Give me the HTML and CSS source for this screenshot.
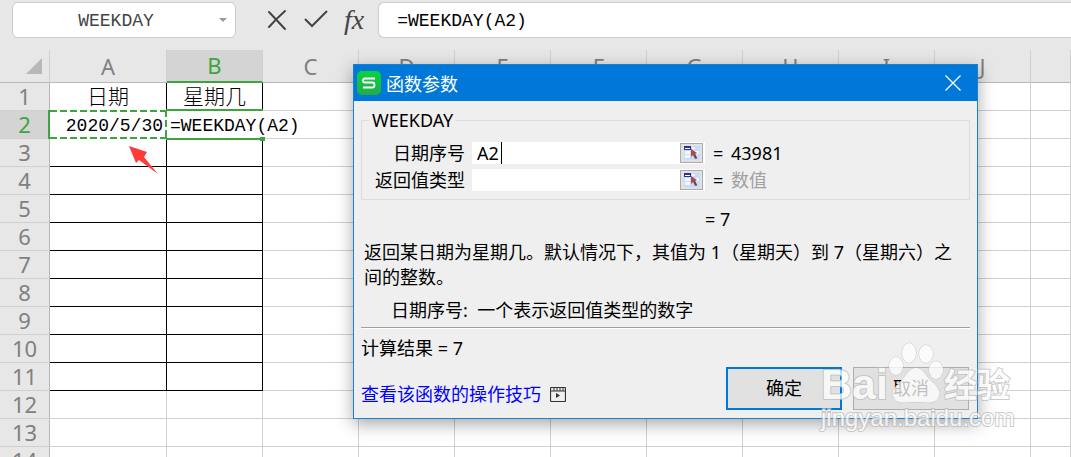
FILE: index.html
```html
<!DOCTYPE html>
<html lang="zh-CN">

<head>
    <meta charset="UTF-8">
    <meta name="viewport" content="width=device-width, initial-scale=1.0">
    <title>WEEKDAY</title>
    <link rel="stylesheet" href="styles.css">
</head>

<body>
    <div class="toolbar">
        <div class="name-box">
            <input class="name-input" type="text" value="WEEKDAY" aria-label="名称框">
            <button class="name-arrow" type="button" aria-label="展开"></button>
        </div>
        <div class="formula-tools">
            <button class="tool" type="button" aria-label="取消">
                <svg width="22" height="22" viewBox="0 0 22 22" fill="none" stroke="#444" stroke-linecap="round">
                    <path d="M3 3 L19 20" stroke-width="2" />
                    <path d="M19 2 Q10 10 3 18" stroke-width="2" />
                </svg>
            </button>
            <button class="tool" type="button" aria-label="输入">
                <svg width="24" height="22" viewBox="0 0 24 22" fill="none" stroke="#444" stroke-width="2">
                    <path d="M1 10 L8 17 L23 2" />
                </svg>
            </button>
            <button class="tool fx" type="button">fx</button>
        </div>
        <input class="formula" type="text" value="=WEEKDAY(A2)" aria-label="编辑栏">
    </div>

    <div class="sheet">
        <table class="grid">
            <colgroup>
                <col class="col-head">
                <col class="col-a">
                <col class="col">
                <col class="col">
                <col class="col">
                <col class="col">
                <col class="col">
                <col class="col">
                <col class="col">
                <col class="col">
                <col class="col">
                <col>
            </colgroup>
            <thead>
                <tr>
                    <th class="corner"></th>
                    <th>A</th>
                    <th class="active">B</th>
                    <th>C</th>
                    <th>D</th>
                    <th>E</th>
                    <th>F</th>
                    <th>G</th>
                    <th>H</th>
                    <th>I</th>
                    <th>J</th>
                    <th></th>
                </tr>
            </thead>
            <tbody>
                <tr><th>1</th><td class="boxed center">日期</td><td class="boxed center">星期几</td><td></td><td></td><td></td><td></td><td></td><td></td><td></td><td></td><td></td></tr>
                <tr><th class="active">2</th><td class="source">2020/5/30</td><td class="editing">=WEEKDAY(A2)</td><td></td><td></td><td></td><td></td><td></td><td></td><td></td><td></td><td></td></tr>
                <tr><th>3</th><td class="boxed"></td><td class="boxed"></td><td></td><td></td><td></td><td></td><td></td><td></td><td></td><td></td><td></td></tr>
                <tr><th>4</th><td class="boxed"></td><td class="boxed"></td><td></td><td></td><td></td><td></td><td></td><td></td><td></td><td></td><td></td></tr>
                <tr><th>5</th><td class="boxed"></td><td class="boxed"></td><td></td><td></td><td></td><td></td><td></td><td></td><td></td><td></td><td></td></tr>
                <tr><th>6</th><td class="boxed"></td><td class="boxed"></td><td></td><td></td><td></td><td></td><td></td><td></td><td></td><td></td><td></td></tr>
                <tr><th>7</th><td class="boxed"></td><td class="boxed"></td><td></td><td></td><td></td><td></td><td></td><td></td><td></td><td></td><td></td></tr>
                <tr><th>8</th><td class="boxed"></td><td class="boxed"></td><td></td><td></td><td></td><td></td><td></td><td></td><td></td><td></td><td></td></tr>
                <tr><th>9</th><td class="boxed"></td><td class="boxed"></td><td></td><td></td><td></td><td></td><td></td><td></td><td></td><td></td><td></td></tr>
                <tr><th>10</th><td class="boxed"></td><td class="boxed"></td><td></td><td></td><td></td><td></td><td></td><td></td><td></td><td></td><td></td></tr>
                <tr><th>11</th><td class="boxed"></td><td class="boxed"></td><td></td><td></td><td></td><td></td><td></td><td></td><td></td><td></td><td></td></tr>
                <tr><th>12</th><td></td><td></td><td></td><td></td><td></td><td></td><td></td><td></td><td></td><td></td><td></td></tr>
                <tr><th>13</th><td></td><td></td><td></td><td></td><td></td><td></td><td></td><td></td><td></td><td></td><td></td></tr>
                <tr><th>14</th><td></td><td></td><td></td><td></td><td></td><td></td><td></td><td></td><td></td><td></td><td></td></tr>
            </tbody>
        </table>
    </div>

    <!-- red pointer under A2 -->
    <svg class="pointer" width="30" height="30" viewBox="0 0 30 30">
        <path d="M0 1 L18 7 L15 12 L29 29 L10 15 L7 18 Z" fill="#ff3b37" />
    </svg>

    <div class="dialog" role="dialog" aria-labelledby="dialogTitle">
        <div class="title-bar">
            <svg width="24" height="24" viewBox="0 0 24 24">
                <defs>
                    <linearGradient id="logo" x1="0" y1="0" x2="0" y2="1">
                        <stop offset="0" stop-color="#06d43c" />
                        <stop offset="1" stop-color="#22ac4a" />
                    </linearGradient>
                </defs>
                <rect width="24" height="24" rx="5" fill="url(#logo)" />
                <path d="M18 7.500 H8 Q6 7.500 6 9.500 Q6 11.500 8 11.500 H15.500 Q17.500 11.500 17.500 14 Q17.500 16.500 15.500 16.500 H6" fill="none" stroke="#fff" stroke-width="1.800" />
            </svg>
            <h1 class="title" id="dialogTitle">函数参数</h1>
            <button class="close" type="button" aria-label="关闭">
                <svg width="16" height="16" viewBox="0 0 16 16" stroke="#fff" stroke-width="1.300">
                    <path d="M0.500 0.500 L15.500 15.500 M15.500 0.500 L0.500 15.500" />
                </svg>
            </button>
        </div>

        <form class="dialog-body">
            <fieldset class="params">
                <legend>WEEKDAY</legend>
                <div class="param">
                    <label for="serial">日期序号</label>
                    <div class="ref-box">
                        <div class="ref-text">
                            <input id="serial" type="text" value="A2">
                            <span class="caret"></span>
                        </div>
                        <button class="picker" type="button" aria-label="选择区域">
                            <svg width="16" height="14" viewBox="0 0 16 14">
                                <rect width="16" height="14" fill="#c3dcff" />
                                <path d="M1 5 H6 V8 H1 Z M1 9 H6 V12 H1 Z M8 1 H11 V3 H8 Z M8 5 H15 V8 H8 Z" fill="#f5f9ff" />
                                <rect width="7" height="4" fill="#2f2f9b" />
                                <rect x="1" y="2" width="5" height="1" fill="#fff" />
                                <path d="M7 3 L13 7 L11 8 L13 12 L11 13 L9 9 L7 11 Z" fill="#b5483a" />
                                <path d="M11 8 L13 12 L12 13 L10 9 Z" fill="#54484e" />
                            </svg>
                        </button>
                    </div>
                    <span class="equals">=</span>
                    <span>43981</span>
                </div>
                <div class="param">
                    <label for="returnType">返回值类型</label>
                    <div class="ref-box">
                        <div class="ref-text">
                            <input id="returnType" type="text">
                        </div>
                        <button class="picker" type="button" aria-label="选择区域">
                            <svg width="16" height="14" viewBox="0 0 16 14">
                                <rect width="16" height="14" fill="#c3dcff" />
                                <path d="M1 5 H6 V8 H1 Z M1 9 H6 V12 H1 Z M8 1 H11 V3 H8 Z M8 5 H15 V8 H8 Z" fill="#f5f9ff" />
                                <rect width="7" height="4" fill="#2f2f9b" />
                                <rect x="1" y="2" width="5" height="1" fill="#fff" />
                                <path d="M7 3 L13 7 L11 8 L13 12 L11 13 L9 9 L7 11 Z" fill="#b5483a" />
                                <path d="M11 8 L13 12 L12 13 L10 9 Z" fill="#54484e" />
                            </svg>
                        </button>
                    </div>
                    <span class="equals">=</span>
                    <span class="hint">数值</span>
                </div>
            </fieldset>

            <div class="preview">= 7</div>
            <p class="description">返回某日期为星期几。默认情况下，其值为 1（星期天）到 7（星期六）之间的整数。</p>
            <p class="arg-help">日期序号:&nbsp; 一个表示返回值类型的数字</p>
            <hr class="divider">

            <div class="footer">
                <div class="footer-left">
                    <div>计算结果 = 7</div>
                    <a class="tips" href="#">查看该函数的操作技巧
                        <svg width="16" height="15" viewBox="0 0 16 15" fill="none" stroke="#333">
                            <rect x="0.500" y="0.500" width="15" height="14" rx="1" stroke-width="1.200" />
                            <path d="M1 4 H15 M4 1 V4 M7 1 V4 M10 1 V4 M13 1 V4" />
                            <path d="M6 6 L10 8.500 L6 11 Z" fill="#333" stroke="none" />
                        </svg>
                    </a>
                </div>
                <button class="btn btn-ok" type="button">确定</button>
                <button class="btn" type="button">取消</button>
            </div>
        </form>
    </div>

    <div class="watermark">
        <div class="brand">
            <span class="brand-latin">Bai</span>
            <svg class="paw" width="56" height="62" viewBox="0 0 56 62" fill="#fff" stroke="#bbb">
                <ellipse cx="8" cy="24" rx="7" ry="9" />
                <ellipse cx="21" cy="11" rx="7" ry="10" />
                <ellipse cx="38" cy="12" rx="7" ry="9" />
                <ellipse cx="48" cy="28" rx="7" ry="9" />
                <path d="M28 26 C35 26 37 33 43 39 C49 44 53 49 51 54 C48 63 38 60 28 60 C18 60 8 63 5 54 C3 49 8 44 13 39 C19 33 21 26 28 26 Z" />
            </svg>
            <span class="brand-cn">经验</span>
        </div>
        <div class="site">jingyan.baidu.com</div>
    </div>
</body>

</html>
```
FILE: styles.css
```css
*,
*::before,
*::after {
    box-sizing: border-box;
}

body {
    margin: 0;
    height: 100vh;
    overflow: hidden;
    position: relative;
    background-color: #e7e7e7;
    font-family: "Noto Sans", "Noto Sans CJK SC", sans-serif;
    font-size: 18px;
    color: #000;
}

button,
input {
    font: inherit;
    color: inherit;
    padding: 0;
    border: none;
    background: none;
}

input:focus {
    outline: none;
}

/* Toolbar */
.toolbar {
    display: flex;
    align-items: flex-start;
    height: 50px;
    padding: 2px 0 0 12px;
}

.name-box,
.formula {
    height: 36px;
    border: 1px solid #cdcdcd;
    border-radius: 6px;
    background-color: #fff;
    font-family: "Liberation Mono", monospace;
}

.name-box {
    display: flex;
    width: 224px;
    color: #444;
}

.name-input {
    flex: 1;
    min-width: 0;
    padding-top: 2px;
    text-align: center;
}

.name-arrow {
    width: 16px;
}

.name-arrow::before {
    content: "";
    display: block;
    width: 8px;
    border: 4px solid transparent;
    border-top-color: #999;
    border-bottom: none;
}

.formula-tools {
    display: flex;
    align-items: center;
    gap: 16px;
    height: 36px;
    padding: 0 14px 0 30px;
}

.tool {
    display: flex;
}

.fx {
    font-family: "Liberation Serif", serif;
    font-style: italic;
    font-size: 28px;
    line-height: 32px;
    color: #444;
}

.formula {
    flex: 1;
    min-width: 0;
    padding: 2px 0 0 18px;
    border-right: none;
    border-radius: 6px 0 0 6px;
}

/* Sheet */
.sheet {
    overflow: hidden;
}

.grid {
    width: 100%;
    table-layout: fixed;
    border-collapse: separate;
    border-spacing: 0;
    background-color: #fff;
}

.col-head {
    width: 50px;
}

.col-a {
    width: 117px;
}

.col {
    width: 96px;
}

.grid th,
.grid td {
    height: 28px;
    padding: 0;
    line-height: 27px;
    border-right: 1px solid #d0d0d0;
    border-bottom: 1px solid #d0d0d0;
}

.grid th {
    background-color: #e7e7e7;
    font-size: 22px;
    font-weight: 400;
    color: #808080;
}

.grid tbody th {
    border-right-color: #b8b8b8;
}

.grid thead th {
    height: 33px;
    line-height: 32px;
    border-bottom-color: #b8b8b8;
}

.grid th.active {
    background-color: #d4d4d4;
    color: #3fa43f;
}

.grid thead th.active {
    line-height: 31px;
    border-bottom: 2px solid #3fa43f;
}

.corner::after {
    content: "";
    display: block;
    width: 16px;
    margin-left: 26px;
    border-left: 16px solid transparent;
    border-bottom: 16px solid #b8b8b8;
}

.grid td {
    padding-top: 4px;
    line-height: 23px;
    font-family: "Liberation Mono", "Noto Sans CJK SC", monospace;
    font-weight: 300;
    white-space: nowrap;
}

.grid td.boxed {
    border-color: #000;
}

.grid td.center {
    font-size: 21px;
    text-align: center;
}

.grid td.source {
    position: relative;
    text-align: right;
    padding-right: 3px;
}

/* marching ants round the referenced cell */
.source::after {
    content: "";
    position: absolute;
    inset: -1px -1px -1px -2px;
    border-left: 2px solid #3fa43f;
    background:
        repeating-linear-gradient(90deg, #3fa43f 0 7px, #fff 7px 10px) top / 100% 2px no-repeat,
        repeating-linear-gradient(90deg, #3fa43f 0 7px, #fff 7px 10px) bottom / 100% 2px no-repeat,
        repeating-linear-gradient(#3fa43f 0 7px, #fff 7px 10px) right / 2px 100% no-repeat;
}

.grid td.editing {
    position: relative;
    padding-left: 3px;
    border-right-color: #fff;
}

.editing::before {
    content: "";
    position: absolute;
    inset: -2px -1px;
    border-top: 2px solid #3fa43f;
    border-bottom: 2px solid #3fa43f;
}

.editing::after {
    content: "";
    position: absolute;
    right: -3px;
    bottom: -3px;
    width: 5px;
    height: 4px;
    background-color: #3fa43f;
}

.pointer {
    position: absolute;
    left: 129px;
    top: 145px;
}

/* Dialog window */
.dialog {
    position: absolute;
    left: 353px;
    top: 64px;
    width: 625px;
    border: 1px solid #1a80d0;
    background-color: #efefef;
    box-shadow: 0 5px 16px rgba(0, 0, 0, 0.35);
}

.title-bar {
    display: flex;
    align-items: center;
    gap: 5px;
    height: 36px;
    padding: 0 16px 0 3px;
    background-color: #0078d9;
    color: #fff;
}

.title {
    flex: 1;
    margin: 0;
    font-size: 18px;
    font-weight: 400;
}

.close {
    display: flex;
}

.dialog-body {
    padding: 6px 7px 8px;
    line-height: 25px;
}

.params {
    display: flex;
    flex-direction: column;
    gap: 5px;
    margin: 0;
    padding: 8px 0;
    border: 1px solid #dcdcdc;
}

.params legend {
    margin-left: 7px;
    padding: 0 3px;
    line-height: 27px;
}

.param {
    display: flex;
    align-items: center;
    height: 22px;
}

.param label {
    width: 103px;
    margin-right: 7px;
    text-align: right;
}

.ref-box {
    display: flex;
    width: 233px;
    height: 22px;
    padding: 1px 2px 1px 5px;
    background-color: #fff;
}

.ref-text {
    position: relative;
    flex: 1;
    display: flex;
    min-width: 0;
}

.ref-text input {
    flex: 1;
    min-width: 0;
}

.caret {
    position: absolute;
    left: 24px;
    top: -1px;
    width: 1px;
    height: 22px;
    background-color: #000;
}

.picker {
    display: flex;
    align-items: center;
    justify-content: center;
    width: 23px;
    height: 20px;
    border: 1px solid #aaa;
    background-color: #e1e1e1;
}

.equals {
    width: 26px;
    padding-left: 8px;
}

.hint {
    color: #a0a0a0;
}

.preview {
    padding: 7px 0 8px 344px;
}

.description,
.arg-help {
    margin: 0;
}

.description {
    padding: 0 8px 0 3px;
}

.arg-help {
    padding: 8px 0 4px 30px;
}

.divider {
    height: 2px;
    margin: 0;
    border: none;
    border-top: 1px solid #a0a0a0;
    background-color: #fff;
}

.footer {
    display: flex;
    align-items: flex-end;
    gap: 11px;
    padding: 7px 1px 0 0;
}

.footer-left {
    flex: 1;
    display: flex;
    flex-direction: column;
    gap: 21px;
    padding-bottom: 3px;
}

.tips {
    display: flex;
    align-items: center;
    gap: 9px;
    color: #00f;
    text-decoration: none;
}

.btn {
    width: 116px;
    height: 43px;
    border: 1px solid #adadad;
    background-color: #e1e1e1;
}

.btn-ok {
    border: 2px solid #0078d9;
}

/* Watermark lies over the dialog corner */
.watermark {
    position: absolute;
    left: 821px;
    top: 342px;
    color: #fff;
    opacity: 0.75;
    pointer-events: none;
    -webkit-text-stroke: 2px #bbb;
    paint-order: stroke fill;
}

.brand {
    display: flex;
    align-items: flex-end;
    height: 64px;
    font-weight: 700;
}

.brand-latin {
    font-family: "Liberation Sans", sans-serif;
    font-size: 43px;
    line-height: 44px;
}

.paw {
    margin-bottom: 2px;
}

.brand-cn {
    font-size: 33px;
    line-height: 42px;
}

.site {
    font-family: "Liberation Sans", sans-serif;
    font-size: 24px;
    line-height: 24px;
}
```
